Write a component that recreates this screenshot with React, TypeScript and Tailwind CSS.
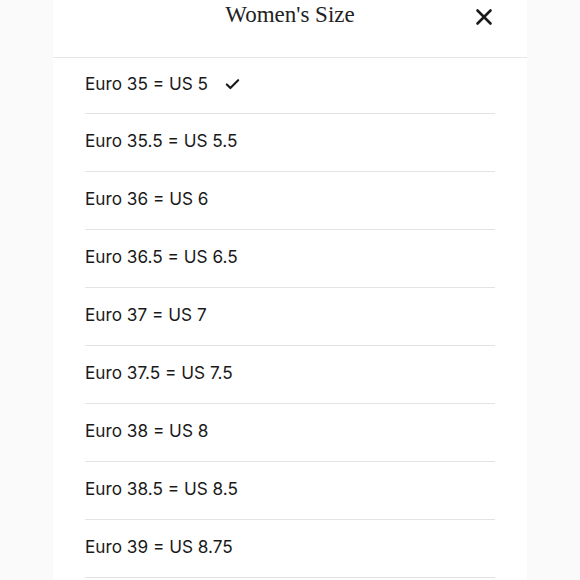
import { Check, X } from "lucide-react";

const sizes = [
  { eu: "35", us: "5", selected: true },
  { eu: "35.5", us: "5.5" },
  { eu: "36", us: "6" },
  { eu: "36.5", us: "6.5" },
  { eu: "37", us: "7" },
  { eu: "37.5", us: "7.5" },
  { eu: "38", us: "8" },
  { eu: "38.5", us: "8.5" },
  { eu: "39", us: "8.75" },
];

export default function App() {
  return (
    <div className="h-[580px] w-[580px] overflow-hidden bg-[#fafafa]">
      <div className="mx-auto h-full w-[474px] bg-white">
        <div className="relative flex h-[58px] items-start justify-center border-b border-[#e6e6e6]">
          <h1 className="mt-[1px] font-['Liberation_Serif',serif] text-[23px] leading-[28px] text-[#222]">
            Women's Size
          </h1>
          <button className="absolute right-[30px] top-[4px] text-[#1a1a1a]" aria-label="Close">
            <X className="h-[26px] w-[26px]" strokeWidth={2.4} />
          </button>
        </div>
        <ul className="mx-8 font-['Inter',sans-serif] text-[#1a1a1a]">
          {sizes.map((s, i) => (
            <li
              key={s.eu}
              className={`flex items-center gap-[16px] border-b border-[#e3e3e3] pb-[3px] text-[17.2px] ${
                i === 0 ? "h-[56px]" : "h-[58px]"
              }`}
            >
              <span>
                Euro {s.eu} = US {s.us}
              </span>
              {s.selected && <Check className="h-[17px] w-[17px]" strokeWidth={3} />}
            </li>
          ))}
        </ul>
      </div>
    </div>
  );
}
